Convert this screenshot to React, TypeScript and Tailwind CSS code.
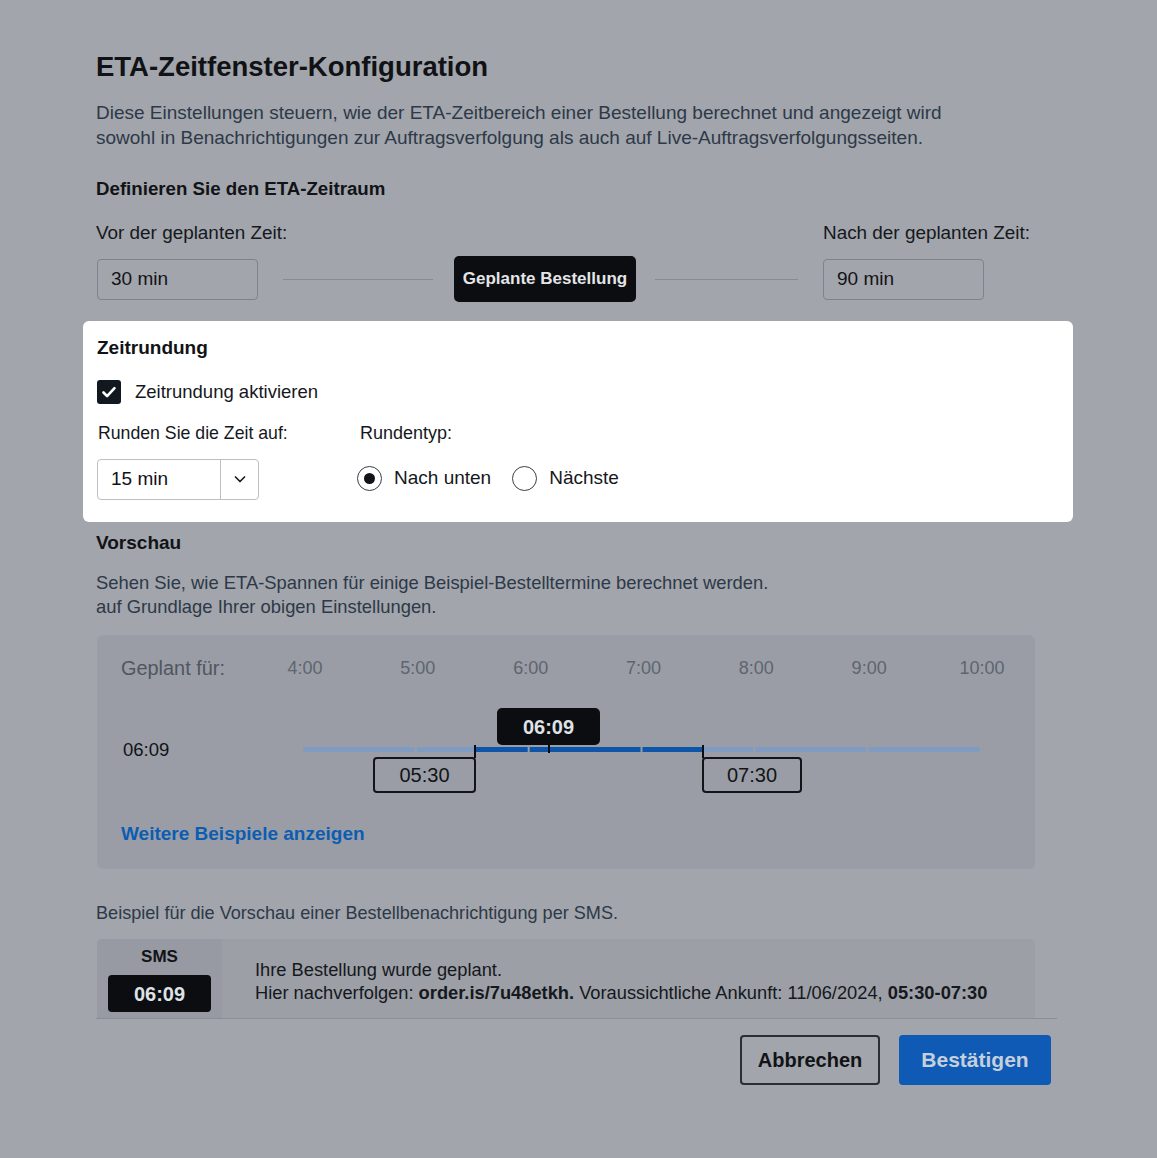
import React from "react";

const HOUR_W = 112.83;
const hours = ["4:00", "5:00", "6:00", "7:00", "8:00", "9:00", "10:00"];

const Field = ({ value }: { value: string }) => (
  <div className="flex h-[41px] w-[161px] items-center rounded-[4px] border border-[#7d828b] pl-[13px] text-[19px] text-[#121417]">
    {value}
  </div>
);

const Radio = ({ checked, label }: { checked?: boolean; label: string }) => (
  <label className="flex items-center gap-[12px]">
    <span className="flex h-[25px] w-[25px] items-center justify-center rounded-full border-[1.5px] border-[#3a3f46] bg-white">
      {checked && <span className="h-[11px] w-[11px] rounded-full bg-[#111418]" />}
    </span>
    <span className="text-[19px] text-[#15181c]">{label}</span>
  </label>
);

const TimelineBar = () => {
  const total = HOUR_W * 6;
  const segs = Array.from({ length: 6 }, (_, i) => ({
    x1: i * HOUR_W + (i === 0 ? 0 : 1),
    x2: (i + 1) * HOUR_W - (i === 5 ? 0 : 1),
  }));
  const darkFrom = 172;
  const darkTo = 400;
  return (
    <svg className="absolute left-0 top-[47px]" width={total} height={6} viewBox={`0 0 ${total} 6`}>
      {segs.map((s, i) => (
        <rect key={i} x={s.x1} y={0} width={s.x2 - s.x1} height={5} rx={i === 0 || i === 5 ? 2.5 : 0} fill="#7f9bc1" />
      ))}
      {segs.map((s, i) => {
        const a = Math.max(s.x1, darkFrom);
        const b = Math.min(s.x2, darkTo);
        if (b <= a) return null;
        return <rect key={"d" + i} x={a} y={0} width={b - a} height={5} fill="#0c55a9" />;
      })}
    </svg>
  );
};

export default function App() {
  return (
    <div className="min-h-[1158px] w-full bg-[#a2a5ab] font-['Liberation_Sans',Arial,sans-serif] text-[#111317]">
      <div className="ml-[96px] w-[961px] pt-[50px]">
        <h1 className="text-[27.5px] font-bold leading-[34px] text-[#101215]">ETA-Zeitfenster-Konfiguration</h1>
        <p className="mt-[16px] text-[19px] leading-[25px] text-[#2d3948]">
          Diese Einstellungen steuern, wie der ETA-Zeitbereich einer Bestellung berechnet und angezeigt wird
          <br />
          sowohl in Benachrichtigungen zur Auftragsverfolgung als auch auf Live-Auftragsverfolgungsseiten.
        </p>

        <h2 className="mt-[27px] text-[18.7px] font-bold leading-[24px]">Definieren Sie den ETA-Zeitraum</h2>

        <div className="mt-[20px] flex text-[18.9px] leading-[24px] text-[#15181c]">
          <span className="w-[727px]">Vor der geplanten Zeit:</span>
          <span>Nach der geplanten Zeit:</span>
        </div>
        <div className="ml-px mt-[11px] flex items-center">
          <Field value="30 min" />
          <div className="ml-[25px] h-px w-[150px] bg-[#858a93]" />
          <div className="ml-[21px] flex h-[46px] w-[182px] items-center justify-center rounded-[5px] bg-[#0b0d10] text-[17px] font-bold text-[#e3e5e8]">
            Geplante Bestellung
          </div>
          <div className="ml-[19px] h-px w-[143px] bg-[#858a93]" />
          <div className="ml-[25px]">
            <Field value="90 min" />
          </div>
        </div>

        <section className="-ml-[13px] mt-[19px] h-[201px] w-[990px] rounded-[6px] bg-white px-[14px] pt-[15px]">
          <h3 className="text-[19px] font-bold leading-[24px]">Zeitrundung</h3>
          <label className="mt-[18px] flex items-center gap-[14px]">
            <span className="flex h-[24px] w-[24px] items-center justify-center rounded-[3px] bg-[#111820]">
              <svg width="18" height="18" viewBox="0 0 18 18" fill="none">
                <path d="M3.5 9.5l3.6 3.6L14.5 5.2" stroke="white" strokeWidth="2.6" strokeLinecap="round" strokeLinejoin="round" />
              </svg>
            </span>
            <span className="text-[18.5px] text-[#15181c]">Zeitrundung aktivieren</span>
          </label>
          <div className="mt-[15px] flex">
            <div className="w-[263px]">
              <div className="pl-[1px] text-[17.7px] leading-[24px] text-[#15181c]">Runden Sie die Zeit auf:</div>
              <div className="mt-[14px] flex h-[41px] w-[162px] items-center rounded-[4px] border border-[#bcc0c6] text-[19px]">
                <span className="w-[122px] pl-[13px]">15 min</span>
                <span className="flex h-full flex-1 items-center justify-center border-l border-[#bcc0c6]">
                  <svg width="14" height="14" viewBox="0 0 14 14" fill="none">
                    <path d="M2.5 5l4.5 4.5L11.5 5" stroke="#1a1d21" strokeWidth="1.7" strokeLinecap="round" strokeLinejoin="round" />
                  </svg>
                </span>
              </div>
            </div>
            <div>
              <div className="text-[18px] leading-[24px] text-[#15181c]">Rundentyp:</div>
              <div className="-ml-[3px] mt-[19px] flex items-center gap-[21px]">
                <Radio checked label="Nach unten" />
                <Radio label="Nächste" />
              </div>
            </div>
          </div>
        </section>

        <h3 className="mt-[9px] text-[19px] font-bold leading-[24px]">Vorschau</h3>
        <p className="mt-[16px] text-[18.4px] leading-[24px] text-[#2d3948]">
          Sehen Sie, wie ETA-Spannen für einige Beispiel-Bestelltermine berechnet werden.
          <br />
          auf Grundlage Ihrer obigen Einstellungen.
        </p>

        <div className="ml-px mt-[16px] h-[234px] w-[938px] rounded-[6px] bg-[#9a9da5] pl-[24px] pt-[21px]">
          <div className="flex items-center">
            <span className="w-[182px] text-[19.9px] leading-[24px] text-[#4f5661]">Geplant für:</span>
            <div className="relative h-[24px] w-[677px]">
              {hours.map((h, i) => (
                <span
                  key={h}
                  className="absolute top-0 -translate-x-1/2 text-[18px] leading-[24px] text-[#5d6570]"
                  style={{ left: i * HOUR_W + 2 }}
                >
                  {h}
                </span>
              ))}
            </div>
          </div>
          <div className="mt-[20px] flex h-[96px] items-center">
            <span className="w-[182px] pl-[2px] pt-[4px] text-[18.5px] text-[#111317]">06:09</span>
            <div className="relative h-[96px] w-[677px]">
              <TimelineBar />
              <div className="absolute left-[194px] top-[8px] flex h-[37px] w-[103px] items-center justify-center rounded-[5px] bg-[#0b0d10] text-[20px] font-bold text-[#dfe2e6]">
                06:09
              </div>
              <div className="absolute left-[245px] top-[45px] h-[8px] w-[2px] bg-[#0b0d10]" />
              <div className="absolute left-[171px] top-[45px] h-[13px] w-[2px] bg-[#0b0d10]" />
              <div className="absolute left-[70px] top-[57px] flex h-[36px] w-[103px] items-center justify-center rounded-[4px] border-2 border-[#121417] text-[20px] text-[#121417]">
                05:30
              </div>
              <div className="absolute left-[399px] top-[45px] h-[13px] w-[2px] bg-[#0b0d10]" />
              <div className="absolute left-[399px] top-[57px] flex h-[36px] w-[100px] items-center justify-center rounded-[4px] border-2 border-[#121417] text-[20px] text-[#121417]">
                07:30
              </div>
            </div>
          </div>
          <a className="mt-[26px] block text-[19px] font-bold leading-[24px] text-[#0c5db2]">Weitere Beispiele anzeigen</a>
        </div>

        <p className="mt-[33px] text-[18.1px] leading-[22px] text-[#2d3948]">
          Beispiel für die Vorschau einer Bestellbenachrichtigung per SMS.
        </p>

        <div className="mt-[15px] w-[961px] border-b border-[#8a8e96]">
          <div className="ml-px flex h-[79px] w-[938px] rounded-t-[5px] bg-[#9c9fa6]">
            <div className="flex w-[125px] flex-col items-center rounded-tl-[5px] bg-[#979aa2] pt-[7px]">
              <span className="text-[17px] font-bold leading-[22px]">SMS</span>
              <span className="mt-[7px] flex h-[37px] w-[103px] items-center justify-center rounded-[4px] bg-[#0b0d10] text-[20px] font-bold text-[#dfe2e6]">
                06:09
              </span>
            </div>
            <div className="pl-[33px] pt-[19px] text-[18.3px] leading-[23px] text-[#15181c]">
              <div>Ihre Bestellung wurde geplant.</div>
              <div>
                Hier nachverfolgen: <b>order.is/7u48etkh.</b> Voraussichtliche Ankunft: 11/06/2024, <b>05:30-07:30</b>
              </div>
            </div>
          </div>
        </div>

        <div className="mr-[6px] mt-[16px] flex justify-end gap-[19px]">
          <button className="h-[50px] w-[140px] rounded-[4px] border-2 border-[#2b2f35] text-[20px] font-bold text-[#111317]">
            Abbrechen
          </button>
          <button className="h-[50px] w-[152px] rounded-[4px] bg-[#0e5ab4] text-[21px] font-bold text-[#c6cfdc]">
            Bestätigen
          </button>
        </div>
      </div>
    </div>
  );
}
